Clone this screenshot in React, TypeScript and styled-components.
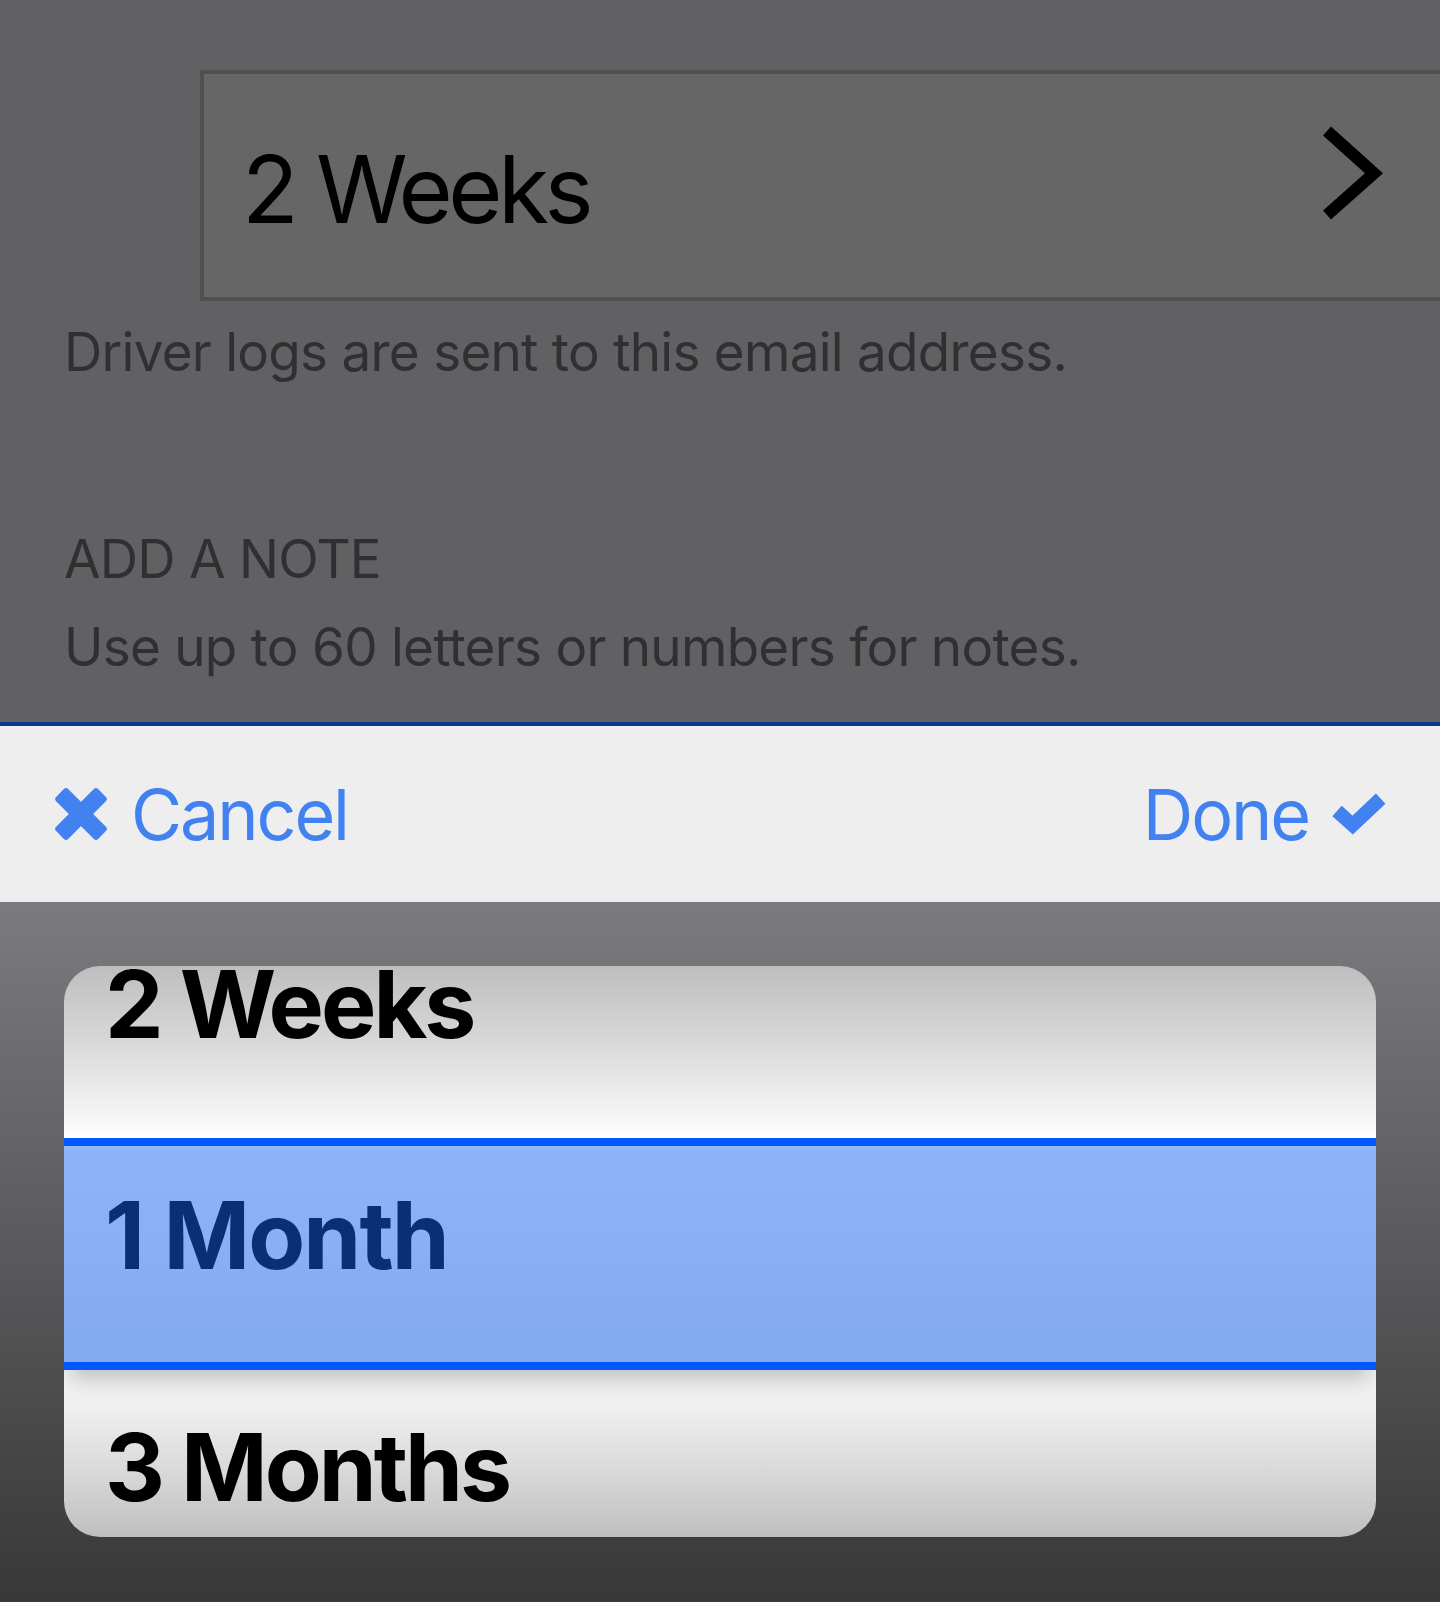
import React from 'react';
import styled, { createGlobalStyle } from 'styled-components';

const GlobalStyle = createGlobalStyle`
  html, body { margin: 0; padding: 0; }
  body {
    width: 1440px;
    height: 1602px;
    overflow: hidden;
    background: #616163;
    font-family: Inter, "Liberation Sans", sans-serif;
  }
`;

const Screen = styled.div`
  width: 1440px;
  height: 1602px;
  display: flex;
  flex-direction: column;
  overflow: hidden;
`;

const Form = styled.section`
  flex: none;
  height: 722px;
  box-sizing: border-box;
  padding-top: 70px;
  background: #616163;
  display: flex;
  flex-direction: column;
`;

const SelectBox = styled.div`
  flex: none;
  margin-left: 200px;
  width: 1260px;
  height: 231px;
  box-sizing: border-box;
  border: 4px solid #505052;
  background: #666666;
  display: flex;
  align-items: center;
  padding: 7px 68px 0 38px;
`;

const SelectValue = styled.span`
  flex: 1;
  font-size: 93px;
  font-weight: 400;
  line-height: normal;
  letter-spacing: -0.048em;
  color: #000;
`;

const Chevron = styled.svg`
  flex: none;
  width: 68px;
  height: 97px;
  margin-bottom: 32px;
`;

const Help = styled.p<{ $gap: number }>`
  margin: ${(p) => p.$gap}px 0 0 64px;
  font-size: 53px;
  line-height: 64px;
  font-weight: 400;
  color: #303032;
  letter-spacing: -0.014em;
  white-space: nowrap;
`;

const Toolbar = styled.div`
  flex: none;
  height: 180px;
  box-sizing: border-box;
  border-top: 4px solid #0a3a90;
  background: #eeeeee;
  display: flex;
  align-items: center;
  justify-content: space-between;
  padding: 0 54px;
`;

const ToolButton = styled.button`
  display: flex;
  align-items: center;
  gap: 23px;
  background: none;
  border: 0;
  padding: 0;
  margin: 0;
  color: #4282f0;
  font-family: Inter, "Liberation Sans", sans-serif;
  font-size: 70px;
  font-weight: 400;
  line-height: normal;
  letter-spacing: -0.03em;
  cursor: pointer;
`;

const PickerArea = styled.div`
  flex: 1;
  background: linear-gradient(to bottom, #7b7a7f 0%, #383838 100%);
  padding: 64px 64px 0;
`;

const Wheel = styled.div`
  width: 1312px;
  height: 571px;
  border-radius: 36px;
  overflow: hidden;
  background: linear-gradient(
    to bottom,
    #bebebe 0px,
    #d6d6d6 70px,
    #fefefe 172px,
    #f0f0f0 440px,
    #dcdcdc 497px,
    #bfbfbf 571px
  );
`;

const WheelTrack = styled.div`
  margin-top: -59px;
  display: flex;
  flex-direction: column;
`;

const WheelItem = styled.div<{ $selected?: boolean }>`
  position: relative;
  box-sizing: border-box;
  height: ${(p) => (p.$selected ? 232 : 231)}px;
  padding: ${(p) => (p.$selected ? 43 : 51)}px 0 0 41px;
  font-size: 93px;
  font-weight: 700;
  line-height: 93px;
  letter-spacing: ${(p) => (p.$selected ? '-0.02em' : '-0.032em')};
  color: ${(p) => (p.$selected ? '#0b2f75' : '#000')};
  ${(p) =>
    p.$selected
      ? `
    background: linear-gradient(to bottom, #9bbcf9 0px, #8fb3f8 4px, #82aaf0 100%);
    border-top: 8px solid #0058ff;
    border-bottom: 8px solid #0058ff;
    box-shadow: 0 16px 20px -8px rgba(0, 0, 0, 0.22);
    z-index: 1;
  `
      : ''}
`;

const CloseIcon = () => (
  <svg width="54" height="54" viewBox="0 0 54 54" aria-hidden="true">
    <g fill="currentColor">
      <rect x="-2.7" y="18.5" width="59.4" height="17" rx="3" transform="rotate(45 27 27)" />
      <rect x="-2.7" y="18.5" width="59.4" height="17" rx="3" transform="rotate(-45 27 27)" />
    </g>
  </svg>
);

const CheckIcon = () => (
  <svg width="54" height="42" viewBox="0 0 54 42" aria-hidden="true">
    <polyline
      points="5,18 20.7,32.1 48.7,5.7"
      fill="none"
      stroke="currentColor"
      strokeWidth="14"
      strokeLinecap="butt"
      strokeLinejoin="miter"
    />
  </svg>
);

const options = ['2 Weeks', '1 Month', '3 Months'];
const selected = '1 Month';

export default function App() {
  return (
    <>
      <GlobalStyle />
      <Screen>
        <Form>
          <SelectBox>
            <SelectValue>2 Weeks</SelectValue>
            <Chevron viewBox="0 0 68 97" aria-hidden="true">
              <polyline
                points="7,6 54,48.3 7,90"
                fill="none"
                stroke="#000"
                strokeWidth="12"
                strokeLinecap="butt"
                strokeLinejoin="miter"
              />
            </Chevron>
          </SelectBox>
          <Help $gap={19}>Driver logs are sent to this email address.</Help>
          <Help $gap={143}>ADD A NOTE</Help>
          <Help $gap={24}>Use up to 60 letters or numbers for notes.</Help>
        </Form>
        <Toolbar>
          <ToolButton type="button">
            <CloseIcon />
            <span>Cancel</span>
          </ToolButton>
          <ToolButton type="button">
            <span>Done</span>
            <CheckIcon />
          </ToolButton>
        </Toolbar>
        <PickerArea>
          <Wheel>
            <WheelTrack>
              {options.map((o) => (
                <WheelItem key={o} $selected={o === selected}>
                  {o}
                </WheelItem>
              ))}
            </WheelTrack>
          </Wheel>
        </PickerArea>
      </Screen>
    </>
  );
}
